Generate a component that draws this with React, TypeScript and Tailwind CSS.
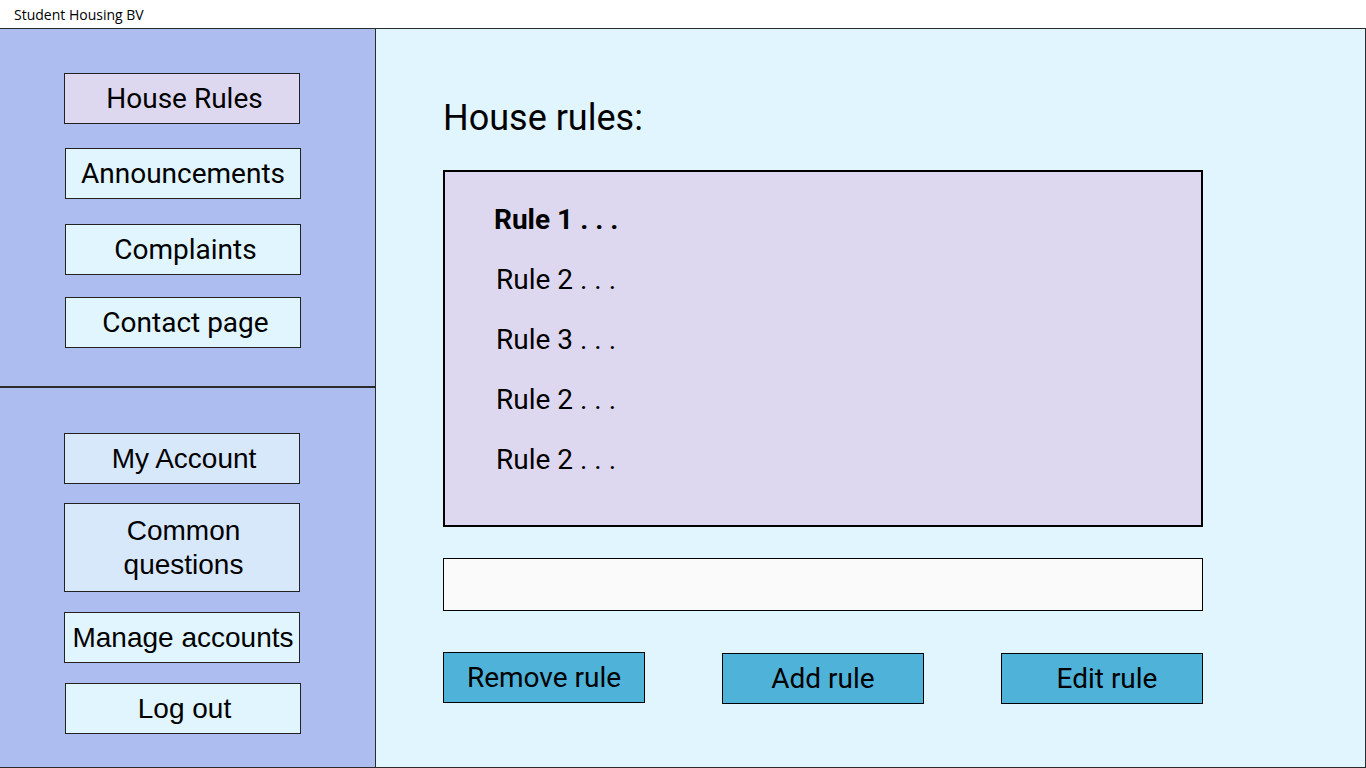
const roboto = { fontFamily: 'Roboto, "Liberation Sans", sans-serif' }
const arial = { fontFamily: '"Liberation Sans", Arial, sans-serif' }

function NavButton({
  label,
  className,
  font = 'roboto',
}: {
  label: React.ReactNode
  className: string
  font?: 'roboto' | 'arial'
}) {
  return (
    <button
      className={`flex w-[236px] items-center justify-center border border-[#222] text-center leading-[34px] text-black ${className}`}
      style={font === 'roboto' ? roboto : arial}
    >
      {label}
    </button>
  )
}

function ActionButton({ label, className = '' }: { label: string; className?: string }) {
  return (
    <button
      className={`flex h-[51px] w-[202px] items-center justify-center border border-black bg-[#4fb3d9] text-[28px] text-black ${className}`}
      style={roboto}
    >
      {label}
    </button>
  )
}

export default function App() {
  const rules = ['Rule 1 . . .', 'Rule 2 . . .', 'Rule 3 . . .', 'Rule 2 . . .', 'Rule 2 . . .']

  return (
    <div className="flex h-[768px] w-[1366px] flex-col overflow-hidden bg-white">
      {/* Window title */}
      <div
        className="flex h-[28px] items-center pl-[14px] text-[14px] text-black"
        style={{ fontFamily: '"Open Sans", "Noto Sans", sans-serif' }}
      >
        Student Housing BV
      </div>

      <div className="flex min-h-0 flex-1 border-y border-r border-[#2b2b2b]">
        {/* Sidebar */}
        <aside className="flex w-[376px] shrink-0 flex-col border-r border-[#2b2b2b] bg-[#adbdf0]">
          <div className="flex h-[359px] flex-col border-b-2 border-[#2b2b2b] pt-[44px]">
            <NavButton label="House Rules" className="ml-[64px] h-[51px] bg-[#ddd8ef] pl-[5px] text-[28px]" />
            <NavButton label="Announcements" className="ml-[65px] mt-[24px] h-[51px] bg-[#e0f5fd] text-[28px]" />
            <NavButton label="Complaints" className="ml-[65px] mt-[25px] h-[51px] bg-[#e0f5fd] pl-[5px] text-[28px]" />
            <NavButton label="Contact page" className="ml-[65px] mt-[22px] h-[51px] bg-[#e0f5fd] pl-[5px] text-[28px]" />
          </div>
          <div className="flex flex-col pt-[45px]">
            <NavButton label="My Account" font="arial" className="ml-[64px] h-[51px] bg-[#d8e8fb] pl-[4px] text-[28px]" />
            <NavButton
              label={
                <span>
                  Common
                  <br />
                  questions
                </span>
              }
              font="arial"
              className="ml-[64px] mt-[19px] h-[89px] bg-[#d8e8fb] pl-[3px] text-[28px]"
            />
            <NavButton label="Manage accounts" font="arial" className="ml-[64px] mt-[20px] h-[51px] bg-[#e0f5fd] pl-[2px] text-[28px]" />
            <NavButton label="Log out" font="arial" className="ml-[65px] mt-[20px] h-[51px] bg-[#e0f5fd] pl-[3px] text-[28px]" />
          </div>
        </aside>

        {/* Main panel */}
        <main className="flex flex-1 flex-col bg-[#e0f5fd] pl-[67px] pt-[68px]">
          <h1 className="h-[42px] text-[36px] leading-[42px] text-black" style={roboto}>
            House rules:
          </h1>
          <div className="mt-[31px] flex h-[357px] w-[760px] flex-col border-2 border-black bg-[#ddd8ef] pl-[51px] pt-[30px]">
            {rules.map((rule, i) => (
              <div
                key={i}
                className={`h-[60px] text-[28px] leading-[36px] text-black ${i === 0 ? 'font-bold -ml-[2px]' : ''}`}
                style={roboto}
              >
                {rule}
              </div>
            ))}
          </div>
          <input className="mt-[31px] h-[53px] w-[760px] border border-black bg-[#fafafa] outline-none" />
          <div className="mt-[41px] flex w-[760px] items-start justify-between">
            <ActionButton label="Remove rule" />
            <ActionButton label="Add rule" className="mt-[1px]" />
            <ActionButton label="Edit rule" className="mt-[1px] pl-[10px]" />
          </div>
        </main>
      </div>
    </div>
  )
}
